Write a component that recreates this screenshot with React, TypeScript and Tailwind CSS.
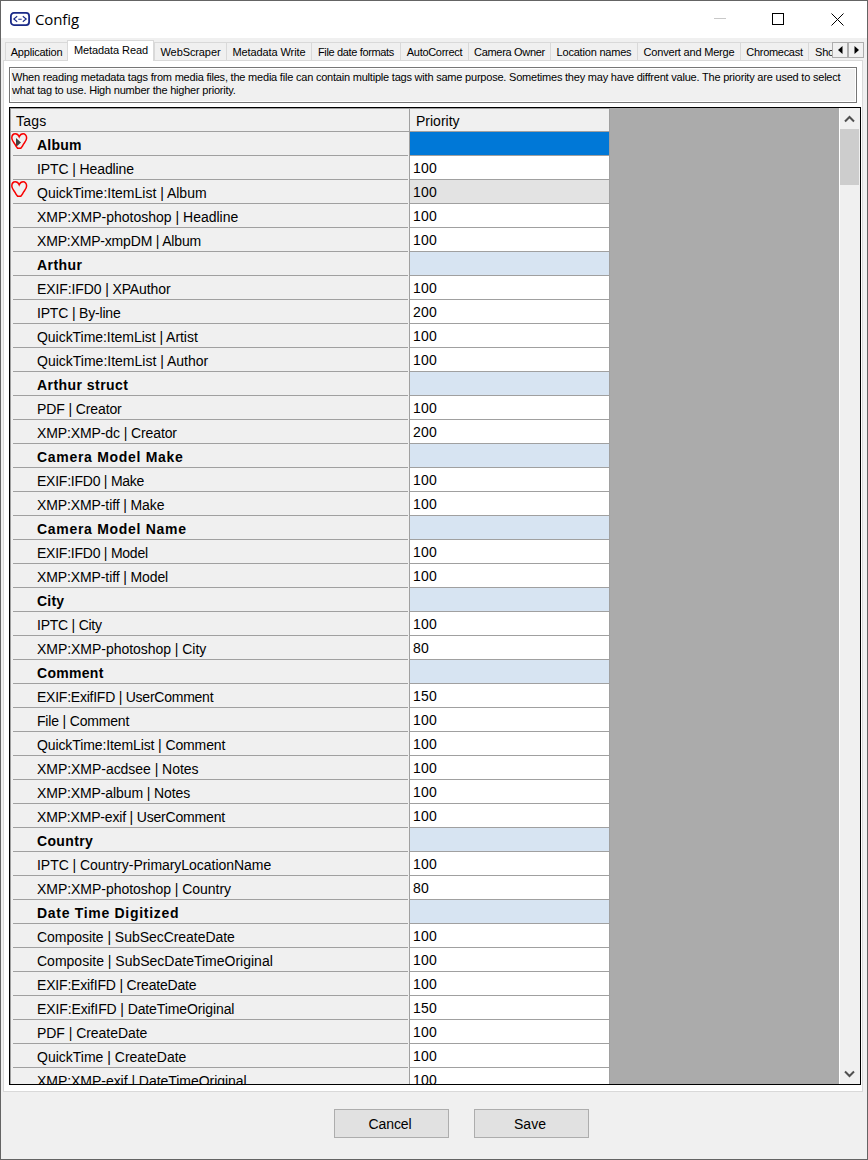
import React from "react";

type Row = { label: string; value?: string; group?: boolean; heart?: boolean; tracking: string };

const T0 = "tracking-[-0.24px]";
const T05 = "tracking-[-0.18px]";
const T1 = "tracking-[-0.11px]";
const T2 = "tracking-[-0.04px]";
const T25 = "tracking-normal";

const g = (label: string, tracking: string, heart = false): Row => ({ label, group: true, heart, tracking });
const r = (label: string, value: string, tracking: string, heart = false): Row => ({ label, value, heart, tracking });

const rows: Row[] = [
  g("Album", "tracking-[0.2px]", true),
  r("IPTC | Headline", "100", T1),
  r("QuickTime:ItemList | Album", "100", T25, true),
  r("XMP:XMP-photoshop | Headline", "100", T25),
  r("XMP:XMP-xmpDM | Album", "100", T05),
  g("Arthur", "tracking-[0.45px]"),
  r("EXIF:IFD0 | XPAuthor", "100", T1),
  r("IPTC | By-line", "200", T05),
  r("QuickTime:ItemList | Artist", "100", T2),
  r("QuickTime:ItemList | Author", "100", T25),
  g("Arthur struct", "tracking-[0.45px]"),
  r("PDF | Creator", "100", T1),
  r("XMP:XMP-dc | Creator", "200", T1),
  g("Camera Model Make", "tracking-[0.7px]"),
  r("EXIF:IFD0 | Make", "100", T0),
  r("XMP:XMP-tiff | Make", "100", T1),
  g("Camera Model Name", "tracking-[0.7px]"),
  r("EXIF:IFD0 | Model", "100", T0),
  r("XMP:XMP-tiff | Model", "100", T1),
  g("City", "tracking-[0.2px]"),
  r("IPTC | City", "100", T0),
  r("XMP:XMP-photoshop | City", "80", T2),
  g("Comment", "tracking-[0.3px]"),
  r("EXIF:ExifIFD | UserComment", "150", T0),
  r("File | Comment", "100", T05),
  r("QuickTime:ItemList | Comment", "100", T1),
  r("XMP:XMP-acdsee | Notes", "100", T2),
  r("XMP:XMP-album | Notes", "100", T1),
  r("XMP:XMP-exif | UserComment", "100", T05),
  g("Country", "tracking-[0.35px]"),
  r("IPTC | Country-PrimaryLocationName", "100", T2),
  r("XMP:XMP-photoshop | Country", "80", T2),
  g("Date Time Digitized", "tracking-[0.7px]"),
  r("Composite | SubSecCreateDate", "100", T2),
  r("Composite | SubSecDateTimeOriginal", "100", T25),
  r("EXIF:ExifIFD | CreateDate", "100", T05),
  r("EXIF:ExifIFD | DateTimeOriginal", "150", T1),
  r("PDF | CreateDate", "100", T2),
  r("QuickTime | CreateDate", "100", T25),
  r("XMP:XMP-exif | DateTimeOriginal", "100", T2),
];

const tabs = [
  { label: "Application", cls: "w-[62px] tracking-[-0.2px]" },
  { label: "Metadata Read", cls: "w-[87px] tracking-[-0.1px] pl-px", active: true },
  { label: "WebScraper", cls: "w-[72px] tracking-[-0.1px]" },
  { label: "Metadata Write", cls: "w-[85px] tracking-[-0.1px]" },
  { label: "File date formats", cls: "w-[89px] tracking-[-0.35px]" },
  { label: "AutoCorrect", cls: "w-[68px] tracking-[-0.3px]" },
  { label: "Camera Owner", cls: "w-[82px] tracking-[-0.3px]" },
  { label: "Location names", cls: "w-[87px] tracking-[-0.2px]" },
  { label: "Convert and Merge", cls: "w-[103px] tracking-[-0.2px]" },
  { label: "Chromecast", cls: "w-[68px] tracking-[-0.3px]" },
];

function Heart({ pointer }: { pointer: boolean }) {
  return (
    <svg className="absolute left-0 top-px" width="17" height="17" viewBox="0 0 17 17" fill="none">
      {pointer && <path d="M5 5v9l5-4.5z" fill="#404040" />}
      <path
        d="M8.2 3.8C7.2 1.4 5.6 0.8 4.3 0.8C2.3 0.8 0.8 2.4 0.8 4.9C0.8 8.4 3.8 9.8 5 13.2L6.6 15.3H9.8L11.4 13.2C12.6 9.8 15.6 8.4 15.6 4.9C15.6 2.4 14.1 0.8 12.1 0.8C10.8 0.8 9.2 1.4 8.2 3.8Z"
        stroke="#f80000"
        strokeWidth="1.5"
      />
    </svg>
  );
}

function TitleBar() {
  return (
    <header className="flex h-[37px] shrink-0 items-center bg-white pl-[9px]">
      <svg width="20" height="14" viewBox="0 0 20 14" fill="none" className="mt-[-1px]">
        <rect x="0.9" y="0.9" width="18.2" height="12.2" rx="3" stroke="#1a2a88" strokeWidth="1.8" />
        <path d="M7.2 4.3L3.8 7l3.4 2.7M12.8 4.3L16.2 7l-3.4 2.7M8.3 7.2h3.4" stroke="#1a2a88" strokeWidth="1.1" />
      </svg>
      <h1 className="ml-[5px] mt-[-1px] flex-1 font-['Open_Sans',sans-serif] text-[15px] leading-5 tracking-[-0.1px]">Config</h1>
      <svg width="152" height="14" viewBox="0 0 152 14" fill="none" className="mr-[1px] mt-[-1px]" shapeRendering="crispEdges">
        <path d="M0 6.5h12" stroke="#c8c8c8" />
        <rect x="58.5" y="1.5" width="11" height="11" stroke="#000" />
        <path d="M117.5 1.5l12 12M129.5 1.5l-12 12" stroke="#000" shapeRendering="auto" />
      </svg>
    </header>
  );
}

function TabStrip() {
  return (
    <nav className="relative z-10 mt-[2px] flex h-[21px] shrink-0 items-end overflow-hidden pl-1 text-[11px] leading-[13px]">
      {tabs.map((t) => (
        <div
          key={t.label}
          className={
            (t.active ? "h-[21px] border-x border-t bg-white pb-[2px] " : "mb-px h-[18px] border-l border-t bg-[#f0f0f0] pt-px ") +
            "flex shrink-0 items-center justify-center whitespace-nowrap border-[#d9d9d9] " +
            t.cls
          }
        >
          {t.label}
        </div>
      ))}
      <div className="mb-px flex h-[18px] w-6 shrink-0 items-center overflow-hidden whitespace-nowrap border-l border-t border-[#d9d9d9] pl-[6px] pt-px tracking-[-0.2px]">
        Show
      </div>
      <div className="mb-[3px] flex h-4 shrink-0">
        <button className="flex h-4 w-4 items-center justify-center border border-[#adadad] bg-[#f0f0f0]">
          <svg width="5" height="8" viewBox="0 0 5 8"><path d="M4.5 0v8L0 4z" /></svg>
        </button>
        <button className="flex h-4 w-4 items-center justify-center border border-[#adadad] bg-[#f0f0f0]">
          <svg width="5" height="8" viewBox="0 0 5 8"><path d="M.5 0v8L5 4z" /></svg>
        </button>
      </div>
    </nav>
  );
}

function GridRow({ row, index }: { row: Row; index: number }) {
  const bg = index === 0 ? "bg-[#0078d7]" : row.group ? "bg-[#d7e4f2]" : index === 2 ? "bg-[#e3e3e3]" : "bg-white";
  return (
    <div className="flex h-6 shrink-0">
      <div className="relative w-[399px] border-r border-[#a0a0a0] bg-[#f0f0f0] pl-[2px] pr-px">
        <div
          className={
            "h-6 whitespace-nowrap border-b border-[#a0a0a0] pl-6 pt-[5px] leading-4 " + row.tracking + (row.group ? " font-bold" : "")
          }
        >
          {row.label}
        </div>
        {row.heart && <Heart pointer={index === 0} />}
      </div>
      <div className={"w-[200px] border-b border-r border-[#a0a0a0] pl-[3px] pt-[4px] leading-4 tracking-[0.2px] " + bg}>
        {row.value}
      </div>
    </div>
  );
}

function TagGrid() {
  return (
    <section className="mt-1 flex h-[978px] w-[852px] overflow-hidden border border-black bg-[#ababab] text-[14px]">
      <div className="flex w-[600px] flex-col border-l border-[#a0a0a0]">
        <div className="flex h-6 shrink-0 border-b border-t border-[#a0a0a0] bg-[#f0f0f0] leading-4">
          <div className="w-[399px] border-r border-[#a0a0a0] pl-[5px] pt-[4px] tracking-[0.2px]">Tags</div>
          <div className="w-[200px] border-r border-[#a0a0a0] pl-[6px] pt-[4px]">Priority</div>
        </div>
        {rows.map((row, i) => (
          <GridRow key={i} row={row} index={i} />
        ))}
      </div>
      <div className="flex-1" />
      <div className="flex w-[21px] flex-col border-l border-white bg-[#f0f0f0] pr-px">
        <div className="flex h-[21px] items-center justify-center">
          <svg width="11" height="8" viewBox="0 0 11 8" fill="none"><path d="M1 6.5L5.5 2L10 6.5" stroke="#505050" strokeWidth="2" /></svg>
        </div>
        <div className="h-14 bg-[#cdcdcd]" />
        <div className="flex-1" />
        <div className="flex h-[21px] items-center justify-center">
          <svg width="11" height="8" viewBox="0 0 11 8" fill="none"><path d="M1 1.5L5.5 6L10 1.5" stroke="#505050" strokeWidth="2" /></svg>
        </div>
      </div>
    </section>
  );
}

export default function App() {
  return (
    <div className="flex h-[1160px] w-[868px] flex-col border border-[#646464] bg-[#f0f0f0] font-['Liberation_Sans',Arial,sans-serif] text-black">
      <TitleBar />
      <TabStrip />
      <main className="ml-[2px] mt-[-1px] h-[1032px] w-[860px] shrink-0 border border-[#d9d9d9] bg-white pl-[5px] pt-[6px]">
        <div className="h-9 w-[848px] border border-[#767676] bg-white p-px">
          <p className="h-full whitespace-pre bg-[#f0f0f0] pl-px pt-[2px] text-[11px] leading-[13px] tracking-[-0.21px]">
            {"When reading metadata tags from media files, the media file can contain multiple tags with same purpose. Sometimes they may have diffrent value. The priority are used to select\nwhat tag to use. High number the higher priority."}
          </p>
        </div>
        <TagGrid />
      </main>
      <footer className="mt-[17px] flex gap-[25px] pl-[333px] text-[14px]">
        <button className="h-[29px] w-[115px] border border-[#adadad] bg-[#e1e1e1] pr-[3px] pt-[2px] tracking-[-0.1px]">Cancel</button>
        <button className="h-[29px] w-[115px] border border-[#adadad] bg-[#e1e1e1] pr-[3px] pt-[2px]">Save</button>
      </footer>
    </div>
  );
}
